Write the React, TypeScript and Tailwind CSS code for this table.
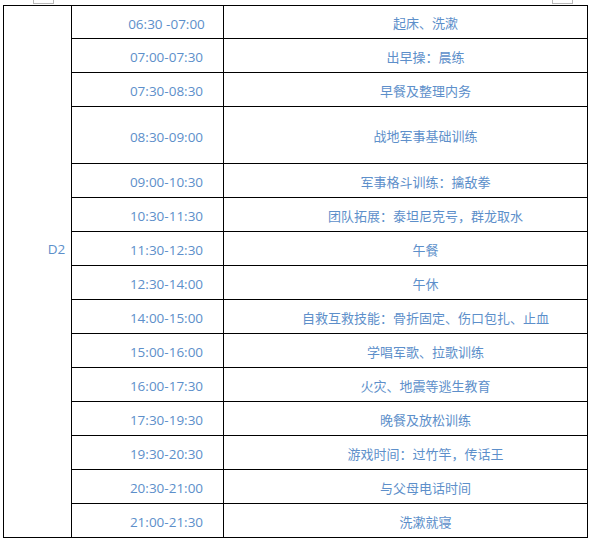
import * as React from "react";

const rows: { time: string; item: string; tall?: boolean }[] = [
  { time: "06:30 -07:00", item: "起床、洗漱" },
  { time: "07:00-07:30", item: "出早操：晨练" },
  { time: "07:30-08:30", item: "早餐及整理内务" },
  { time: "08:30-09:00", item: "战地军事基础训练", tall: true },
  { time: "09:00-10:30", item: "军事格斗训练：擒敌拳" },
  { time: "10:30-11:30", item: "团队拓展：泰坦尼克号，群龙取水" },
  { time: "11:30-12:30", item: "午餐" },
  { time: "12:30-14:00", item: "午休" },
  { time: "14:00-15:00", item: "自救互救技能：骨折固定、伤口包扎、止血" },
  { time: "15:00-16:00", item: "学唱军歌、拉歌训练" },
  { time: "16:00-17:30", item: "火灾、地震等逃生教育" },
  { time: "17:30-19:30", item: "晚餐及放松训练" },
  { time: "19:30-20:30", item: "游戏时间：过竹竿，传话王" },
  { time: "20:30-21:00", item: "与父母电话时间" },
  { time: "21:00-21:30", item: "洗漱就寝" },
];

export default function App() {
  return (
    <div
      className="relative h-[539px] w-[590px] bg-white pt-[5px] pl-[3px] text-[13.5px] text-[#5d8fca]"
      style={{ fontFamily: '"Open Sans", "Noto Sans CJK SC", sans-serif' }}
    >
      {/* word table handles */}
      <div className="absolute left-[33px] top-0 h-[4px] w-[21px] border-b border-x border-[#b8b8b8]" />
      <div className="absolute left-[552px] top-0 h-[4px] w-[21px] border-b border-x border-[#b8b8b8]" />

      <div className="flex w-[585px] border border-black">
        <div className="w-[68px] shrink-0 border-r border-black pt-[233px] pl-[38px] text-center leading-[20px]">
          D2
        </div>
        <div className="flex-1">
          {rows.map((row, i) => (
            <div
              key={row.time}
              className={`flex ${i === 0 ? "h-[32px]" : "border-t border-black"} ${
                row.tall ? "h-[57px]" : i === 0 ? "" : "h-[34px]"
              }`}
            >
              <div className="flex w-[152px] shrink-0 items-center justify-center border-r border-black pl-[38px] pt-[4px]">
                {row.time}
              </div>
              <div className="flex flex-1 items-center justify-center whitespace-nowrap pl-[40px] pt-[4px] text-[13px]">
                {row.item}
              </div>
            </div>
          ))}
        </div>
      </div>
    </div>
  );
}
